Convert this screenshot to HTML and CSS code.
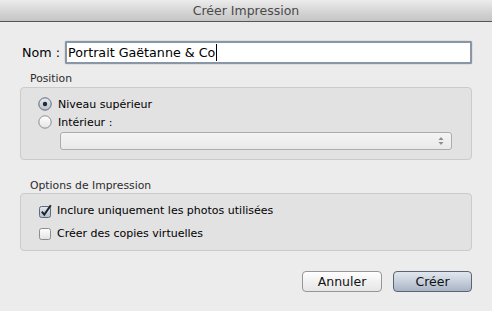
FILE: index.html
```html
<!DOCTYPE html>
<html lang="fr">
<head>
    <meta charset="UTF-8">
    <title>Créer Impression</title>
    <link rel="stylesheet" href="styles.css">
</head>
<body>
    <div class="window">
        <div class="titlebar">Créer Impression</div>

        <div class="content">
            <!-- nom de l'impression -->
            <div class="name-row">
                <label class="name-label" for="name">Nom :</label>
                <div class="name-input" id="name">Portrait Gaëtanne &amp; Co<span class="caret"></span></div>
            </div>

            <!-- position -->
            <div class="group-label">Position</div>
            <div class="group group-position">
                <div class="option-row">
                    <svg class="radio" width="14" height="14" viewBox="0 0 14 14">
                        <defs>
                            <linearGradient id="radioOn" x1="0" y1="0" x2="0" y2="1">
                                <stop offset="0" stop-color="#e6ebf2"/>
                                <stop offset="1" stop-color="#b7c1cf"/>
                            </linearGradient>
                        </defs>
                        <circle cx="7" cy="7" r="6.2" fill="url(#radioOn)" stroke="#5f6977" stroke-width="1"/>
                        <circle cx="7" cy="7" r="2.2" fill="#262a30"/>
                    </svg>
                    <span>Niveau supérieur</span>
                </div>
                <div class="option-row">
                    <svg class="radio" width="14" height="14" viewBox="0 0 14 14">
                        <defs>
                            <linearGradient id="radioOff" x1="0" y1="0" x2="0" y2="1">
                                <stop offset="0" stop-color="#ffffff"/>
                                <stop offset="1" stop-color="#e4e4e4"/>
                            </linearGradient>
                        </defs>
                        <circle cx="7" cy="7" r="6.2" fill="url(#radioOff)" stroke="#8c8c8c" stroke-width="1"/>
                    </svg>
                    <span>Intérieur :</span>
                </div>
                <div class="popup">
                    <svg width="6" height="10" viewBox="0 0 6 10">
                        <path d="M3 1 L5.5 4 L0.5 4 Z" fill="#8e8e8e"/>
                        <path d="M3 9 L5.5 6 L0.5 6 Z" fill="#8e8e8e"/>
                    </svg>
                </div>
            </div>

            <!-- options -->
            <div class="group-label group-label-second">Options de Impression</div>
            <div class="group group-options">
                <div class="check-row">
                    <svg class="check" width="14" height="14" viewBox="0 0 14 14">
                        <defs>
                            <linearGradient id="checkOn" x1="0" y1="0" x2="0" y2="1">
                                <stop offset="0" stop-color="#e3e9f1"/>
                                <stop offset="1" stop-color="#b3bece"/>
                            </linearGradient>
                        </defs>
                        <rect x="1.5" y="2.5" width="11" height="11" rx="2" fill="url(#checkOn)" stroke="#5f6977"/>
                        <path d="M3.8 7.6 L6.3 10.6 L12.8 1.2" fill="none" stroke="#1f2329" stroke-width="2"/>
                    </svg>
                    <span>Inclure uniquement les photos utilisées</span>
                </div>
                <div class="check-row">
                    <svg class="check" width="14" height="14" viewBox="0 0 14 14">
                        <defs>
                            <linearGradient id="checkOff" x1="0" y1="0" x2="0" y2="1">
                                <stop offset="0" stop-color="#ffffff"/>
                                <stop offset="1" stop-color="#e2e2e2"/>
                            </linearGradient>
                        </defs>
                        <rect x="1.5" y="1.5" width="11" height="11" rx="2" fill="url(#checkOff)" stroke="#8c8c8c"/>
                    </svg>
                    <span>Créer des copies virtuelles</span>
                </div>
            </div>

            <!-- boutons -->
            <div class="buttons">
                <button class="btn">Annuler</button>
                <button class="btn btn-default">Créer</button>
            </div>
        </div>
    </div>
</body>
</html>
```

FILE: styles.css
```css
/* fenêtre de dialogue */
body {
    margin: 0;
    background-color: #ececec;
    font-family: "DejaVu Sans", Verdana, sans-serif;
    font-size: 11px;
    color: #000;
}

.window {
    width: 492px;
    height: 311px;
    overflow: hidden;
}

.titlebar {
    height: 21px;
    line-height: 21px;
    text-align: center;
    font-size: 12.5px;
    color: #4a4a4a;
    background: linear-gradient(#ececec, #d3d3d3 60%, #c5c5c5);
    border-bottom: 1px solid #555;
}

.content {
    padding: 19px 20px 0 20px;
}

.name-row {
    display: flex;
    align-items: center;
    height: 23px;
}

.name-label {
    width: 43px;
    padding-left: 2px;
    font-size: 12.7px;
}

.name-input {
    flex: 1;
    height: 19px;
    line-height: 19px;
    padding-left: 1px;
    background: #fff;
    border: 2px solid #8896a5;
    border-radius: 2px;
    box-shadow: 0 0 1px #5f6b78;
    font-size: 12.7px;
}

.caret {
    display: inline-block;
    width: 1px;
    height: 17px;
    margin-left: 1px;
    vertical-align: -4px;
    background: #000;
}

.group-label {
    margin-top: 8px;
    padding-left: 10px;
    line-height: 14px;
    font-size: 10.8px;
    color: #2b2b2b;
}

.group-label-second {
    margin-top: 19px;
}

.group {
    margin-top: 1px;
    background-color: #e2e2e2;
    border: 1px solid #cbcbcb;
    border-radius: 4px;
}

.group-position {
    padding-top: 7px;
    padding-bottom: 9px;
}

.group-options {
    margin-top: 0;
    padding: 5px 0;
}

.option-row,
.check-row {
    display: flex;
    align-items: center;
    padding-left: 17px;
    height: 18px;
}

.check-row {
    height: 23px;
}

.radio {
    margin-right: 6px;
}

.check {
    margin-right: 5px;
}

.popup {
    display: flex;
    align-items: center;
    justify-content: flex-end;
    box-sizing: border-box;
    height: 18px;
    margin: 1px 19px 0 39px;
    padding-right: 7px;
    background: linear-gradient(#f4f4f4, #e9e9e9);
    border: 1px solid #acacac;
    border-radius: 3px;
}

.buttons {
    display: flex;
    justify-content: flex-end;
    gap: 11px;
    margin-top: 20px;
}

.btn {
    width: 80px;
    height: 21px;
    padding: 0;
    font-family: "DejaVu Sans", Verdana, sans-serif;
    font-size: 12.5px;
    color: #111;
    background: linear-gradient(#ffffff, #f1f1f1 50%, #e6e6e6);
    border: 1px solid #969696;
    border-radius: 4px;
}

.btn-default {
    width: 79px;
    background: linear-gradient(#e1e7ef, #c6cfdb 50%, #a9b4c4);
    border-color: #5c6473;
}
```
